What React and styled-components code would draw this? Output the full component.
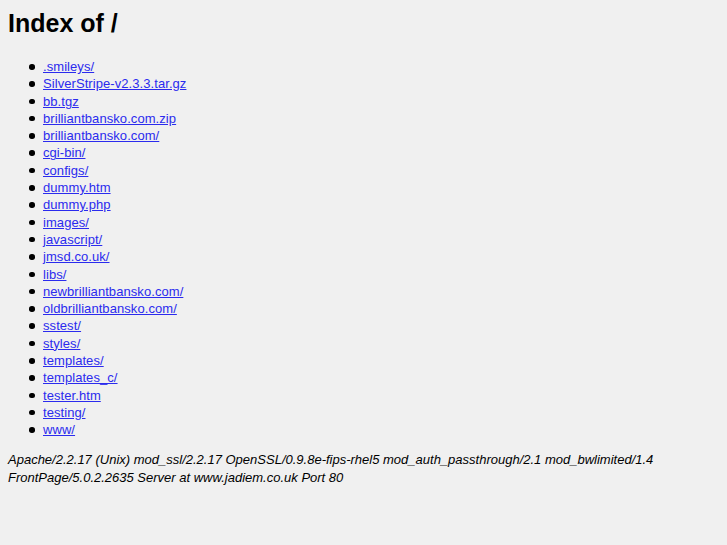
import styled, { createGlobalStyle } from 'styled-components';

const GlobalStyle = createGlobalStyle`
  html, body {
    margin: 0;
    background: #f0f0f0;
  }
  body {
    font-family: "Liberation Sans", Arial, sans-serif;
    color: #000;
  }
`;

const Page = styled.div`
  padding: 9px 8px 0 8px;
  min-height: 545px;
  box-sizing: border-box;
`;

const Title = styled.h1`
  margin: 0 0 20px 0;
  font-size: 25px;
  font-weight: bold;
`;

const List = styled.ul`
  margin: 0 0 12px 0;
  padding-left: 35px;
  font-size: 13px;
  line-height: 17.3px;
  list-style: none;
`;

const Item = styled.li`
  letter-spacing: 0.07px;

  &::before {
    content: '';
    display: inline-block;
    width: 5.5px;
    height: 5.5px;
    margin-left: -14px;
    margin-right: 8.5px;
    border-radius: 50%;
    background: #000;
    vertical-align: 1.5px;
  }
`;

const FileLink = styled.a`
  color: #2b2bee;
  text-decoration: underline;
`;

const Footer = styled.address`
  font-size: 13px;
  line-height: 18px;
  font-style: italic;
`;

const files = [
  '.smileys/',
  'SilverStripe-v2.3.3.tar.gz',
  'bb.tgz',
  'brilliantbansko.com.zip',
  'brilliantbansko.com/',
  'cgi-bin/',
  'configs/',
  'dummy.htm',
  'dummy.php',
  'images/',
  'javascript/',
  'jmsd.co.uk/',
  'libs/',
  'newbrilliantbansko.com/',
  'oldbrilliantbansko.com/',
  'sstest/',
  'styles/',
  'templates/',
  'templates_c/',
  'tester.htm',
  'testing/',
  'www/',
];

export default function App() {
  return (
    <>
      <GlobalStyle />
      <Page>
        <Title>Index of /</Title>
        <List>
          {files.map((name) => (
            <Item key={name}>
              <FileLink href={'#' + name}>{name}</FileLink>
            </Item>
          ))}
        </List>
        <Footer>
          Apache/2.2.17 (Unix) mod_ssl/2.2.17 OpenSSL/0.9.8e-fips-rhel5 mod_auth_passthrough/2.1 mod_bwlimited/1.4
          <br />
          FrontPage/5.0.2.2635 Server at www.jadiem.co.uk Port 80
        </Footer>
      </Page>
    </>
  );
}
